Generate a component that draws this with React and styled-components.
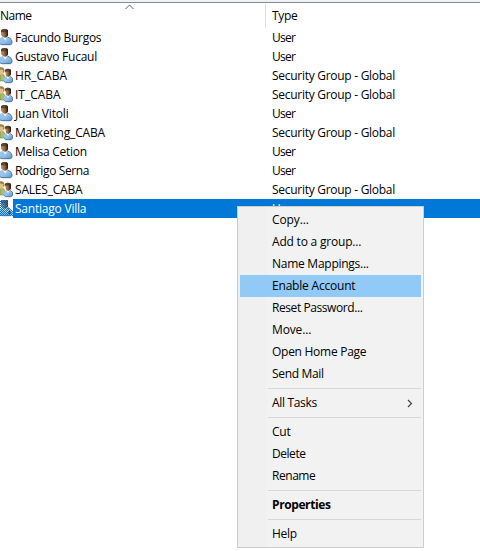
import React from "react";
import styled, { createGlobalStyle, css } from "styled-components";

const Global = createGlobalStyle`
  * { box-sizing: border-box; }
  body { margin: 0; background: #fff; overflow: hidden; }
`;

const Page = styled.main`
  position: relative;
  width: 480px;
  height: 551px;
  overflow: hidden;
  background: #fff;
  color: #000;
  font: 12px/19px "Open Sans", "Noto Sans", sans-serif;
  white-space: pre;
`;

const TopEdge = styled.div`
  height: 3px;
  background: #f0f0f0;
  border-bottom: 1px solid #828c94;
`;

const Columns = css`
  display: grid;
  grid-template-columns: 265px 215px;
`;

const Header = styled.div`
  ${Columns}
  position: relative;
  height: 25px;
  padding-top: 1px;
`;

const HeaderCell = styled.div`
  height: 24px;
  line-height: 24px;
  padding-left: ${(p) => (p.$divided ? "6px" : "0")};
  border-left: ${(p) => (p.$divided ? "1px solid #e0e0e0" : "0")};
`;

const SortArrow = styled.svg`
  position: absolute;
  left: 125px;
  top: 1px;
`;

const Row = styled.div`
  ${Columns}
  height: 19px;
  color: ${(p) => (p.$selected ? "#fff" : "#000")};
  background: ${(p) => (p.$selected ? "linear-gradient(90deg, #fff 13px, #0078d7 13px)" : "none")};
`;

const NameCell = styled.div`
  display: flex;
  gap: 2px;
`;

const TypeCell = styled.div`
  padding-left: 7px;
`;

const Text = styled.span`
  letter-spacing: ${(p) => p.$track ?? 0}px;
`;

const Icon = styled.svg`
  flex: none;
  width: 13px;
  height: 19px;
`;

const Definitions = styled.svg`
  display: block;
  width: 0;
  height: 0;
`;

const Menu = styled.div`
  position: absolute;
  left: 237px;
  top: 206px;
  width: 187px;
  padding: 2px;
  border: 1px solid #ccc;
  background: linear-gradient(90deg, #f0f0f0 29px, #f2f2f2 29px);
`;

const MenuItem = styled.div`
  display: flex;
  align-items: center;
  justify-content: space-between;
  height: 22px;
  line-height: 22px;
  padding: 0 8px 0 32px;
  font-weight: ${(p) => (p.$bold ? 700 : 400)};
  background: ${(p) => (p.$active ? "#91c9f7" : "transparent")};
`;

const Separator = styled.div`
  height: 7px;
  margin-left: 28px;
  border: solid transparent;
  border-width: 3px 0;
  background: #d7d7d7;
  background-clip: content-box;
`;

function Gradients() {
  return (
    <Definitions>
      <defs>
        <linearGradient id="hair" x2="1">
          <stop stopColor="#5b4028" /><stop offset=".5" stopColor="#604632" /><stop offset="1" stopColor="#1e1a16" />
        </linearGradient>
        <linearGradient id="face" x2="1">
          <stop stopColor="#c79a6e" /><stop offset=".45" stopColor="#9a6c46" /><stop offset="1" stopColor="#35261b" />
        </linearGradient>
        <linearGradient id="shirt" x2="1" y2="1">
          <stop stopColor="#9cc6ec" /><stop offset=".5" stopColor="#94c0e8" /><stop offset="1" stopColor="#5c90c2" />
        </linearGradient>
        <pattern id="dither" width="2" height="2" patternUnits="userSpaceOnUse">
          <path d="M0 0h1v1H0zM1 1h1v1H1z" fill="#0078d7" shapeRendering="crispEdges" />
        </pattern>
      </defs>
    </Definitions>
  );
}

const USER_BODY = "M0 10L2.5 9h5l3 1.4 1.5 2.8v2.3L10.5 17H2L0 15.8z";
const USER_HEAD = "M1 2.2Q2.2 1 4.5 1 7.8 1 8 3v3.7Q7.4 9.7 5 9.7 2.8 9.7 1 7z";

function UserIcon({ disabled }) {
  return (
    <Icon viewBox="0 0 13 19">
      <path d={USER_BODY} fill="url(#shirt)" />
      <path d="M7.5 9l3 1.4 1.5 2.8v2.3L10.5 16.7H2L0 15.8" fill="none" stroke="#40678e" strokeWidth=".8" />
      <path d="M2.6 9l2.8 3.7L7.3 9z" fill="#edf4fa" />
      <path d={USER_HEAD} fill="url(#face)" />
      <path d="M1 4.3V2.2Q2.2 1 4.5 1 7.8 1 8 3v4L6.8 8.7V4.2z" fill="url(#hair)" />
      {disabled && (
        <>
          <circle cx="9.5" cy="13.3" r="3" fill="#dce8f2" />
          <path d="M9.5 11v4.5M7.5 13.3l2 2.2 2-2.2" fill="none" stroke="#142a3e" strokeWidth="1.3" />
          <path d="M0 1h8v7l5 4v5H0z" fill="url(#dither)" />
        </>
      )}
    </Icon>
  );
}

function GroupIcon() {
  return (
    <Icon viewBox="0 0 13 19">
      <path d="M0 8l3.5.5 2 3V15H0z" fill="#a9bd68" stroke="#71834a" strokeWidth=".6" />
      <path d="M0 1.5q3.7-.7 4 2.8L3.5 7.5 1.5 9 0 8.5z" fill="#e4c18b" />
      <path d="M0 1.3q3.7-.5 4.3 2.3v2.8L3.2 6.7V4L0 3.4z" fill="#9b8240" />
      <path d="M3.8 12l2.5-1.7h4l2.2 2v3.2L11 16.7H5.5L3.8 15z" fill="url(#shirt)" />
      <path d="M10.3 10.4l2.2 2v3.2L11 16.7H5.5L3.8 15" fill="none" stroke="#40678e" strokeWidth=".8" />
      <path d="M6 10.3l2 2.8 1.5-2.8z" fill="#edf5fb" />
      <path d="M5 4q.7-1.3 2.8-1.3Q10.8 2.7 11 5l-.3 4-2.2 2L6 10z" fill="url(#face)" />
      <path d="M4.8 5.8V4Q5.8 2.7 8 2.7q3 0 3.1 2.8L10.7 9l-1.2.5V5.5z" fill="url(#hair)" />
    </Icon>
  );
}

const entries = [
  { name: "Facundo Burgos", track: -0.3 },
  { name: "Gustavo Fucaul", track: -0.25 },
  { name: "HR_CABA", group: true },
  { name: "IT_CABA", group: true },
  { name: "Juan Vitoli", track: -0.18 },
  { name: "Marketing_CABA", group: true, track: -0.17 },
  { name: "Melisa Cetion", track: -0.27 },
  { name: "Rodrigo Serna", track: -0.38 },
  { name: "SALES_CABA", group: true, track: -0.2 },
  { name: "Santiago Villa", track: -0.22, selected: true },
];

const menu = [
  { label: "Copy...", track: -0.1 },
  { label: "Add to a group...", track: -0.2 },
  { label: "Name Mappings...", track: -0.26 },
  { label: "Enable Account", track: -0.2, active: true },
  { label: "Reset Password...", track: -0.42 },
  { label: "Move...", track: -0.15 },
  { label: "Open Home Page", track: -0.27 },
  { label: "Send Mail", track: -0.33 },
  null,
  { label: "All Tasks", track: -0.33, submenu: true },
  null,
  { label: "Cut", track: -0.2 },
  { label: "Delete", track: -0.45 },
  { label: "Rename", track: -0.45 },
  null,
  { label: "Properties", track: -0.4, bold: true },
  null,
  { label: "Help", track: -0.25 },
];

export default function App() {
  return (
    <>
      <Global />
      <Page>
        <Gradients />
        <TopEdge />
        <Header>
          <HeaderCell><Text $track={-0.5}>Name</Text></HeaderCell>
          <HeaderCell $divided><Text $track={-0.3}>Type</Text></HeaderCell>
          <SortArrow width="9" height="6"><path d="M.5 5l4-4 4 4" fill="none" stroke="#606060" /></SortArrow>
        </Header>
        {entries.map(({ name, group, track, selected }) => (
          <Row key={name} $selected={selected}>
            <NameCell>
              {group ? <GroupIcon /> : <UserIcon disabled={selected} />}
              <Text $track={track}>{name}</Text>
            </NameCell>
            <TypeCell>
              <Text $track={group ? -0.28 : -0.7}>{group ? "Security Group - Global" : "User"}</Text>
            </TypeCell>
          </Row>
        ))}
        <Menu>
          {menu.map((item, i) => item ? (
            <MenuItem key={item.label} $active={item.active} $bold={item.bold}>
              <Text $track={item.track}>{item.label}</Text>
              {item.submenu && (
                <svg width="6" height="9"><path d="M1 1l3.5 3.5L1 8" fill="none" stroke="#444" strokeWidth="1.2" /></svg>
              )}
            </MenuItem>
          ) : <Separator key={i} />)}
        </Menu>
      </Page>
    </>
  );
}
